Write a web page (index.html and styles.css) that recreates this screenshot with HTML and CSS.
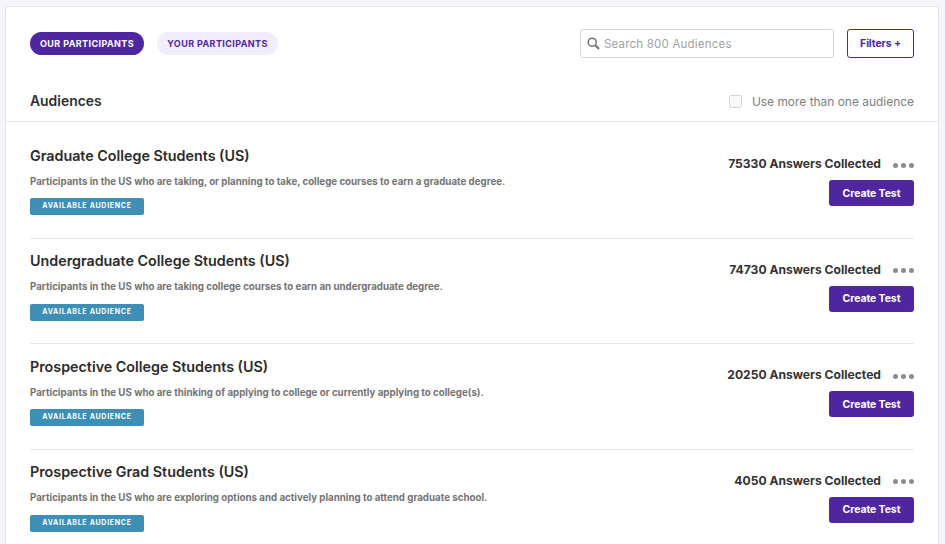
FILE: index.html
```html
<!DOCTYPE html>
<html lang="en">
<head>
<meta charset="utf-8">
<title>Audiences</title>
<link rel="stylesheet" href="styles.css">
</head>
<body>
<main class="card">
  <div class="toolbar">
    <div class="pills">
      <span class="pill pill-on">OUR PARTICIPANTS</span>
      <span class="pill pill-off">YOUR PARTICIPANTS</span>
    </div>
    <div class="tools">
      <div class="search">
        <svg class="search-icon" width="13" height="13" viewBox="0 0 13 13" fill="none" stroke="#6f6f6f"><circle cx="5.2" cy="5.2" r="4" stroke-width="1.5"/><path d="M8.2 8.2 L12 12" stroke-width="2"/></svg>
        <span class="search-text">Search 800 Audiences</span>
      </div>
      <button class="filters">Filters +</button>
    </div>
  </div>
  <div class="heading">
    <h1>Audiences</h1>
    <label class="multi"><span class="checkbox"></span>Use more than one audience</label>
  </div>
  <div class="list">
    <section class="row">
      <div class="info">
        <h2>Graduate College Students (US)</h2>
        <p>Participants in the US who are taking, or planning to take, college courses to earn a graduate degree.</p>
        <span class="tag">AVAILABLE AUDIENCE</span>
      </div>
      <div class="side">
        <div class="count"><span>75330 Answers Collected</span><span class="dots"><i></i><i></i><i></i></span></div>
        <button class="create">Create Test</button>
      </div>
    </section>
    <section class="row">
      <div class="info">
        <h2>Undergraduate College Students (US)</h2>
        <p>Participants in the US who are taking college courses to earn an undergraduate degree.</p>
        <span class="tag">AVAILABLE AUDIENCE</span>
      </div>
      <div class="side">
        <div class="count"><span>74730 Answers Collected</span><span class="dots"><i></i><i></i><i></i></span></div>
        <button class="create">Create Test</button>
      </div>
    </section>
    <section class="row">
      <div class="info">
        <h2>Prospective College Students (US)</h2>
        <p>Participants in the US who are thinking of applying to college or currently applying to college(s).</p>
        <span class="tag">AVAILABLE AUDIENCE</span>
      </div>
      <div class="side">
        <div class="count"><span>20250 Answers Collected</span><span class="dots"><i></i><i></i><i></i></span></div>
        <button class="create">Create Test</button>
      </div>
    </section>
    <section class="row">
      <div class="info">
        <h2>Prospective Grad Students (US)</h2>
        <p>Participants in the US who are exploring options and actively planning to attend graduate school.</p>
        <span class="tag">AVAILABLE AUDIENCE</span>
      </div>
      <div class="side">
        <div class="count"><span>4050 Answers Collected</span><span class="dots"><i></i><i></i><i></i></span></div>
        <button class="create">Create Test</button>
      </div>
    </section>
  </div>
</main>
</body>
</html>
```
FILE: styles.css
```css
* { box-sizing: border-box; }
html, body { height: 100%; }
body {
  margin: 0;
  padding: 6px 6px 0 5px;
  background: #f4f5fa;
  font-family: "Inter", "Liberation Sans", sans-serif;
  color: #2b2b2b;
  overflow: hidden;
}
.card {
  background: #fff;
  border: 1px solid #e6e6ea;
  border-bottom: 0;
  border-radius: 4px 4px 0 0;
  height: 538px;
  overflow: hidden;
}
.toolbar {
  display: flex;
  justify-content: space-between;
  align-items: flex-start;
  padding: 22px 24px 0 24px;
}
.pills { display: flex; gap: 13px; padding-top: 3px; }
.pill {
  height: 23px;
  border-radius: 12px;
  font-size: 9px;
  font-weight: 700;
  letter-spacing: 0.4px;
  line-height: 23px;
  text-align: center;
}
.pill-on { width: 114px; background: #4f26a0; color: #fff; }
.pill-off { width: 121px; background: #f2edfd; color: #4f26a0; }
.tools { display: flex; gap: 13px; }
.search {
  width: 254px;
  height: 29px;
  border: 1px solid #d4d4d4;
  border-radius: 3px;
  display: flex;
  align-items: center;
  gap: 4px;
  padding-left: 6px;
}
.search-text { font-size: 11.5px; color: #a2a2a2; letter-spacing: 0.2px; }
.filters {
  width: 67px;
  height: 29px;
  border: 1px solid #4f26a0;
  border-radius: 3px;
  background: #fff;
  color: #4f26a0;
  font: 700 10.5px "Inter", sans-serif;
  letter-spacing: -0.1px;
  padding: 0;
}
.heading {
  display: flex;
  justify-content: space-between;
  align-items: center;
  margin-top: 23px;
  height: 41px;
  padding: 0 24px 0 24px;
  border-bottom: 1px solid #e6e6e6;
}
h1 { margin: 0; font-size: 13.9px; font-weight: 600; color: #2f2f2f; }
.multi { display: flex; align-items: center; gap: 10px; font-size: 11.95px; color: #7d7d7d; }
.checkbox { width: 13px; height: 13px; border: 1px solid #d6d6d6; border-radius: 2px; background: #f8f8f8; }
.list { padding: 11px 24px 0; }
.row {
  height: 105.5px;
  display: flex;
  justify-content: space-between;
  border-bottom: 1px solid #e6e6e6;
  padding-top: 13.75px;
}
.info { display: flex; flex-direction: column; align-items: flex-start; }
h2 { margin: 0; font-size: 14.3px; line-height: 18px; font-weight: 600; color: #2b2b2b; }
.info p { margin: 11px 0 0; font-size: 9.72px; line-height: 12px; font-weight: 700; color: #747474; }
.tag {
  margin-top: 10.5px;
  width: 114px;
  height: 17px;
  border-radius: 2px;
  background: #3d8fb6;
  color: #fff;
  font-size: 7px;
  font-weight: 700;
  letter-spacing: 0.72px;
  line-height: 16.6px;
  text-align: center;
}
.side { display: flex; flex-direction: column; align-items: flex-end; padding-top: 9.25px; }
.count { display: flex; align-items: center; gap: 12px; font-size: 12.1px; font-weight: 700; line-height: 16px; color: #333; }
.dots { display: flex; gap: 3px; padding-top: 2px; }
.dots i { width: 5px; height: 5px; border-radius: 50%; background: #8c8c8c; }
.create {
  margin-top: 8px;
  width: 85px;
  height: 26px;
  border: 0;
  border-radius: 3px;
  background: #4f26a0;
  color: #fff;
  font: 700 10.5px "Inter", sans-serif;
  letter-spacing: -0.1px;
  padding: 0;
}
```
